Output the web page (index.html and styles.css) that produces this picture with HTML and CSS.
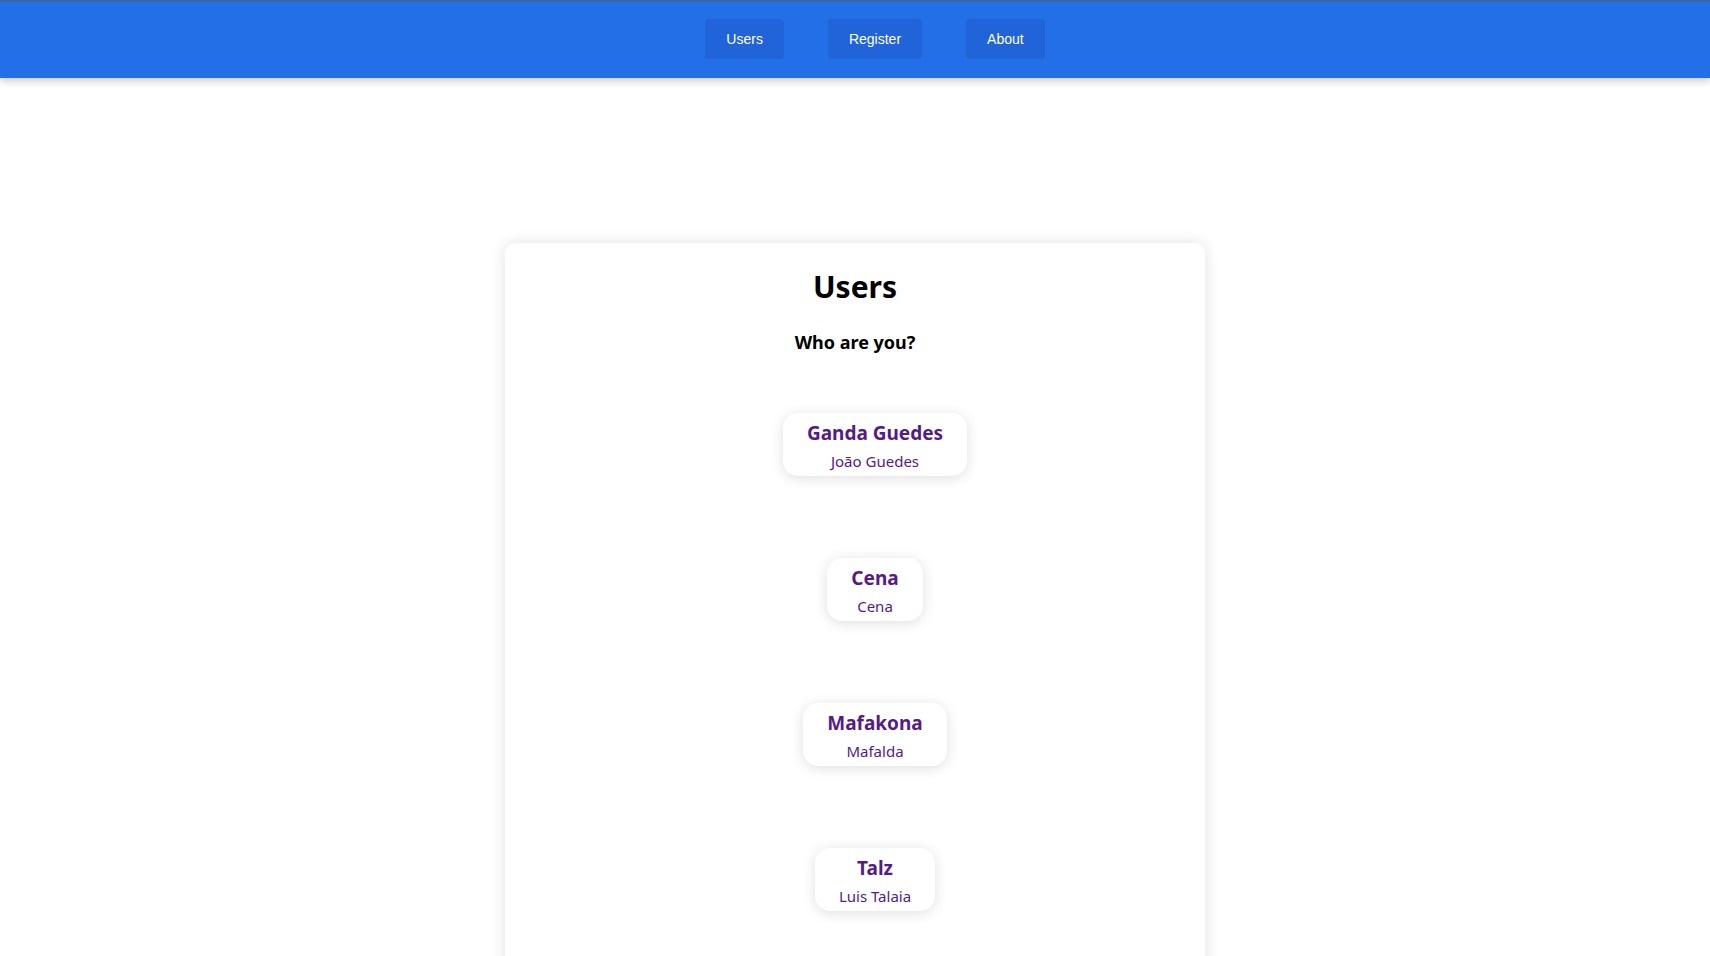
FILE: index.html
```html
<!DOCTYPE html>
<html lang="en">
<head>
<meta charset="utf-8">
<title>Users</title>
<link rel="stylesheet" href="styles.css">
</head>
<body>
<nav class="topbar">
  <a class="nav-btn" href="#">Users</a>
  <a class="nav-btn" href="#">Register</a>
  <a class="nav-btn" href="#">About</a>
</nav>
<main class="page">
  <section class="panel">
    <h1 class="title">Users</h1>
    <h3 class="subtitle">Who are you?</h3>
    <ul class="user-list">
      <li><a class="user-card" href="#"><span class="user-name">Ganda Guedes</span><span class="user-real">João Guedes</span></a></li>
      <li><a class="user-card" href="#"><span class="user-name">Cena</span><span class="user-real">Cena</span></a></li>
      <li><a class="user-card" href="#"><span class="user-name">Mafakona</span><span class="user-real">Mafalda</span></a></li>
      <li><a class="user-card" href="#"><span class="user-name">Talz</span><span class="user-real">Luis Talaia</span></a></li>
    </ul>
  </section>
</main>
</body>
</html>
```
FILE: styles.css
```css
html, body {
  margin: 0;
  padding: 0;
  background: #ffffff;
}
body {
  font-family: "Noto Sans", "Open Sans", sans-serif;
  overflow: hidden;
  height: 956px;
}
.topbar {
  height: 78px;
  box-sizing: border-box;
  border-top: 1px solid #5a5f6a;
  background: #236fe8;
  display: flex;
  justify-content: center;
  align-items: flex-start;
  gap: 44px;
  padding: 18px 0 0 40px;
  box-shadow: 0 3px 8px rgba(0, 0, 0, 0.22);
  position: relative;
  z-index: 1;
}
.nav-btn {
  font-family: "Liberation Sans", Arial, sans-serif;
  font-size: 14px;
  line-height: 16px;
  color: #ffffff;
  text-decoration: none;
  background: #2163d8;
  border-radius: 4px;
  padding: 12px 21px;
}
.page {
  display: flex;
  justify-content: center;
  padding-top: 165px;
}
.panel {
  width: 700px;
  min-height: 760px;
  background: #ffffff;
  border-radius: 10px;
  box-shadow: 0 0 16px rgba(0, 0, 0, 0.12);
  padding-top: 24px;
  box-sizing: border-box;
  text-align: center;
}
.title {
  margin: 0;
  font-size: 30px;
  line-height: 40px;
  font-weight: 700;
  color: #000;
}
.subtitle {
  margin: 23px 0 0;
  font-size: 18px;
  line-height: 24px;
  font-weight: 700;
  color: #000;
}
.user-list {
  list-style: none;
  margin: 59px 0 0;
  padding: 0 0 0 40px;
  display: flex;
  flex-direction: column;
  align-items: center;
  gap: 82px;
}
.user-card {
  display: flex;
  flex-direction: column;
  align-items: center;
  text-decoration: none;
  color: #551a8b;
  background: #ffffff;
  border-radius: 15px;
  padding: 7px 24px 5px;
  box-shadow: 0 2px 14px rgba(0, 0, 0, 0.13);
}
.user-name {
  font-size: 19px;
  line-height: 26px;
  font-weight: 700;
}
.user-real {
  font-size: 15px;
  line-height: 20px;
  margin-top: 5px;
}
```
